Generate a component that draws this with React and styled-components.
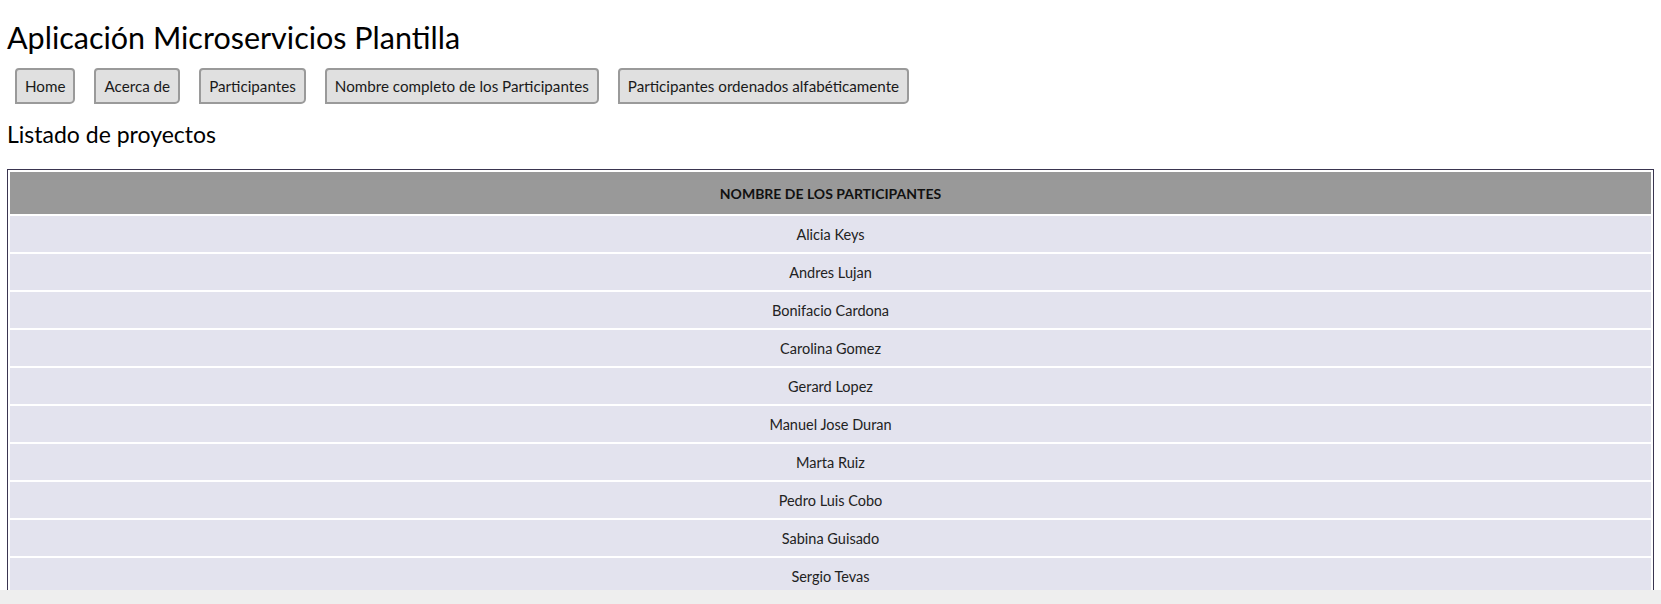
import React from "react";
import styled, { createGlobalStyle } from "styled-components";

const GlobalStyle = createGlobalStyle`
  body {
    margin: 0;
    background: #fff;
    font-family: Lato, "Noto Sans", sans-serif;
    color: #111;
  }
`;

const Page = styled.div`
  padding: 0 7px;
`;

const Title = styled.h1`
  margin: 0;
  padding-top: 17px;
  font-size: 30.5px;
  line-height: 40px;
  font-weight: 400;
  color: #000;
`;

const Nav = styled.nav`
  display: flex;
  gap: 19px;
  padding: 11px 0 0 8px;
`;

const NavButton = styled.button`
  height: 36px;
  padding: 0 8px;
  border: 2px solid #9a9a9a;
  border-radius: 4px 4px 5px 0;
  background: #e0e0e0;
  font-family: inherit;
  font-size: 15.2px;
  color: #1a1a1a;
  cursor: pointer;
`;

const Subtitle = styled.h2`
  margin: 0;
  padding-top: 16px;
  font-size: 23px;
  line-height: 28px;
  font-weight: 400;
  color: #000;
`;

const Table = styled.table`
  width: 100%;
  margin-top: 21px;
  border: 1px solid #3a3550;
  border-collapse: separate;
  border-spacing: 2px;
`;

const HeadCell = styled.th`
  height: 42px;
  padding: 0;
  background: #999999;
  font-size: 14px;
  font-weight: 700;
  color: #111;
  text-align: center;
`;

const Cell = styled.td`
  height: 36px;
  padding: 0;
  background: #e3e3ee;
  font-size: 14.5px;
  color: #222;
  text-align: center;
`;

const ScrollTrack = styled.div`
  position: fixed;
  left: 0;
  right: 0;
  bottom: 0;
  height: 14px;
  background: #eeeeee;
`;

const links = [
  "Home",
  "Acerca de",
  "Participantes",
  "Nombre completo de los Participantes",
  "Participantes ordenados alfabéticamente",
];

const names = [
  "Alicia Keys",
  "Andres Lujan",
  "Bonifacio Cardona",
  "Carolina Gomez",
  "Gerard Lopez",
  "Manuel Jose Duran",
  "Marta Ruiz",
  "Pedro Luis Cobo",
  "Sabina Guisado",
  "Sergio Tevas",
];

const App = () => {
  return (
    <Page>
      <GlobalStyle />
      <Title>Aplicación Microservicios Plantilla</Title>
      <Nav>
        {links.map((l) => (
          <NavButton key={l}>{l}</NavButton>
        ))}
      </Nav>
      <Subtitle>Listado de proyectos</Subtitle>
      <Table>
        <thead>
          <tr>
            <HeadCell>NOMBRE DE LOS PARTICIPANTES</HeadCell>
          </tr>
        </thead>
        <tbody>
          {names.map((n) => (
            <tr key={n}>
              <Cell>{n}</Cell>
            </tr>
          ))}
        </tbody>
      </Table>
      <ScrollTrack />
    </Page>
  );
};

export default App;
